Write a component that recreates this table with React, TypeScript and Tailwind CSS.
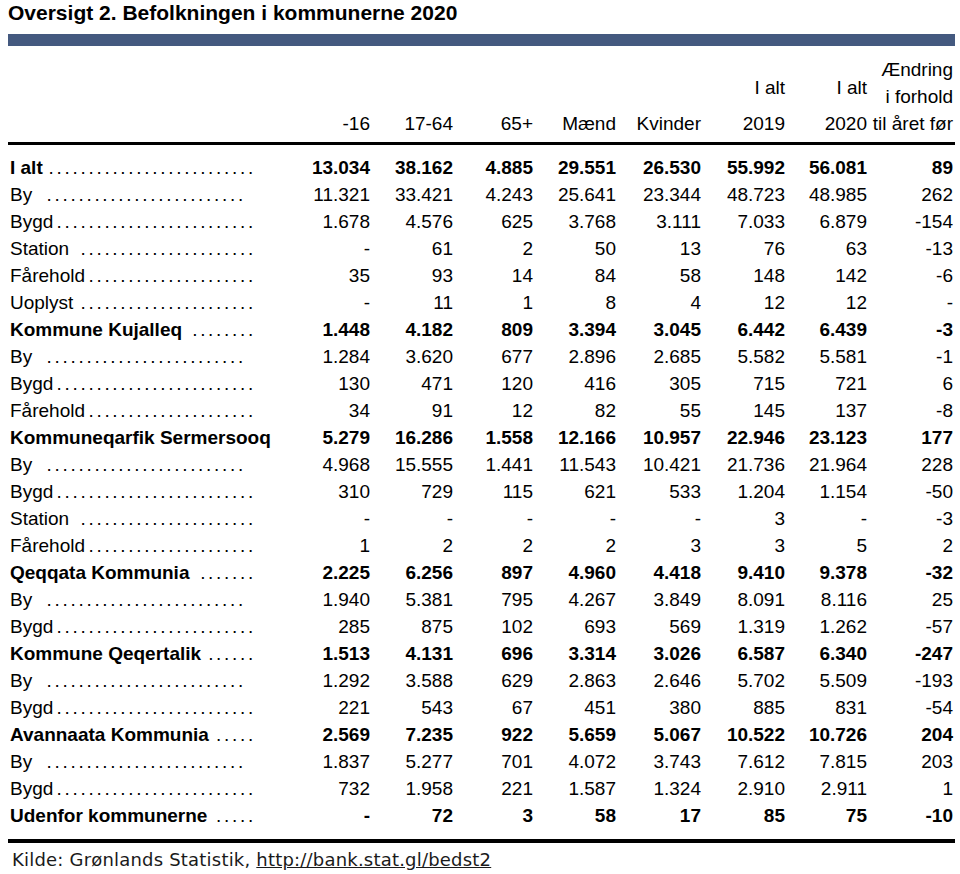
type Row = { label: string; values: string[]; dots: number; bold?: boolean; by?: boolean };

const rows: Row[] = [
  { label: "I alt", bold: true, dots: 26, values: ["13.034", "38.162", "4.885", "29.551", "26.530", "55.992", "56.081", "89"] },
  { label: "By", by: true, dots: 25, values: ["11.321", "33.421", "4.243", "25.641", "23.344", "48.723", "48.985", "262"] },
  { label: "Bygd", dots: 25, values: ["1.678", "4.576", "625", "3.768", "3.111", "7.033", "6.879", "-154"] },
  { label: "Station", dots: 22, values: ["-", "61", "2", "50", "13", "76", "63", "-13"] },
  { label: "Fårehold", dots: 21, values: ["35", "93", "14", "84", "58", "148", "142", "-6"] },
  { label: "Uoplyst", dots: 22, values: ["-", "11", "1", "8", "4", "12", "12", "-"] },
  { label: "Kommune Kujalleq", bold: true, dots: 8, values: ["1.448", "4.182", "809", "3.394", "3.045", "6.442", "6.439", "-3"] },
  { label: "By", by: true, dots: 25, values: ["1.284", "3.620", "677", "2.896", "2.685", "5.582", "5.581", "-1"] },
  { label: "Bygd", dots: 25, values: ["130", "471", "120", "416", "305", "715", "721", "6"] },
  { label: "Fårehold", dots: 21, values: ["34", "91", "12", "82", "55", "145", "137", "-8"] },
  { label: "Kommuneqarfik Sermersooq", bold: true, dots: 0, values: ["5.279", "16.286", "1.558", "12.166", "10.957", "22.946", "23.123", "177"] },
  { label: "By", by: true, dots: 25, values: ["4.968", "15.555", "1.441", "11.543", "10.421", "21.736", "21.964", "228"] },
  { label: "Bygd", dots: 25, values: ["310", "729", "115", "621", "533", "1.204", "1.154", "-50"] },
  { label: "Station", dots: 22, values: ["-", "-", "-", "-", "-", "3", "-", "-3"] },
  { label: "Fårehold", dots: 21, values: ["1", "2", "2", "2", "3", "3", "5", "2"] },
  { label: "Qeqqata Kommunia", bold: true, dots: 7, values: ["2.225", "6.256", "897", "4.960", "4.418", "9.410", "9.378", "-32"] },
  { label: "By", by: true, dots: 25, values: ["1.940", "5.381", "795", "4.267", "3.849", "8.091", "8.116", "25"] },
  { label: "Bygd", dots: 25, values: ["285", "875", "102", "693", "569", "1.319", "1.262", "-57"] },
  { label: "Kommune Qeqertalik", bold: true, dots: 6, values: ["1.513", "4.131", "696", "3.314", "3.026", "6.587", "6.340", "-247"] },
  { label: "By", by: true, dots: 25, values: ["1.292", "3.588", "629", "2.863", "2.646", "5.702", "5.509", "-193"] },
  { label: "Bygd", dots: 25, values: ["221", "543", "67", "451", "380", "885", "831", "-54"] },
  { label: "Avannaata Kommunia", bold: true, dots: 5, values: ["2.569", "7.235", "922", "5.659", "5.067", "10.522", "10.726", "204"] },
  { label: "By", by: true, dots: 25, values: ["1.837", "5.277", "701", "4.072", "3.743", "7.612", "7.815", "203"] },
  { label: "Bygd", dots: 25, values: ["732", "1.958", "221", "1.587", "1.324", "2.910", "2.911", "1"] },
  { label: "Udenfor kommunerne", bold: true, dots: 5, values: ["-", "72", "3", "58", "17", "85", "75", "-10"] },
];

const cols = "grid grid-cols-[282px_80px_83px_80px_83px_85px_84px_82px_86px]";

const DataRow = ({ row }: { row: Row }) => (
  <div className={`${cols} h-[27px] leading-[27px] ${row.bold ? "font-bold" : ""}`}>
    <div className="pl-[2px]">
      <div className={`flex w-[246px] justify-between ${row.by ? "pr-[10px]" : ""}`}>
        <span className="whitespace-nowrap">{row.label}</span>
        {row.dots > 0 && (
          <span className="whitespace-nowrap font-normal tracking-[2.7px]">{".".repeat(row.dots)}</span>
        )}
      </div>
    </div>
    {row.values.map((v, i) => (
      <div key={i} className="text-right whitespace-nowrap">
        {v}
      </div>
    ))}
  </div>
);

export default function App() {
  return (
    <div className="h-[874px] w-[960px] bg-white text-black font-['Liberation_Sans',Arial,sans-serif]">
      <h1 className="pl-[8px] pt-[1px] text-[21px] font-bold leading-[24px]">
        Oversigt 2. Befolkningen i kommunerne 2020
      </h1>
      <div className="ml-[8px] mt-[9px] h-[12px] w-[947px] bg-[#44597f]" />

      <div className="ml-[8px] w-[947px] text-[19px]">
        {/* column heads */}
        <div className={`${cols} items-end border-b-[3px] border-black pb-[5px] pt-[10px] leading-[27px]`}>
          <div />
          <div className="text-right">-16</div>
          <div className="text-right">17-64</div>
          <div className="text-right">65+</div>
          <div className="text-right">Mænd</div>
          <div className="text-right">Kvinder</div>
          <div className="flex flex-col items-end gap-[9px]">
            <span>I alt</span>
            <span>2019</span>
          </div>
          <div className="flex flex-col items-end gap-[9px]">
            <span>I alt</span>
            <span>2020</span>
          </div>
          <div className="whitespace-nowrap text-right">
            <div>Ændring</div>
            <div>i forhold</div>
            <div>til året før</div>
          </div>
        </div>

        <div className="border-b-[4px] border-black pb-[10px] pt-[9px]">
          {rows.map((r, i) => (
            <DataRow key={i} row={r} />
          ))}
        </div>
      </div>

      <p className="mt-[6px] pl-[12px] text-[18px] leading-[22px] tracking-[0.2px] text-[#1a1a1a] font-['DejaVu_Sans',Verdana,sans-serif]">
        Kilde: Grønlands Statistik, <span className="underline">http://bank.stat.gl/bedst2</span>
      </p>
    </div>
  );
}
